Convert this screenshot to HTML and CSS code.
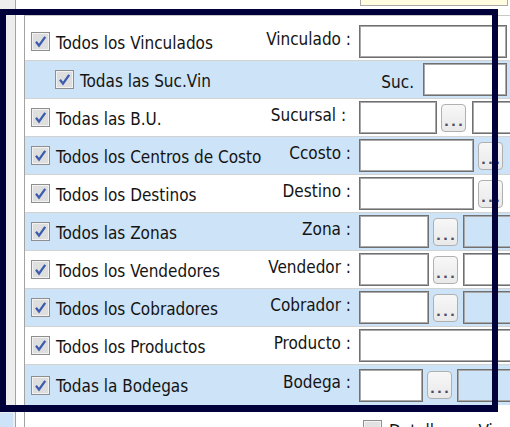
FILE: index.html
```html
<!DOCTYPE html>
<html lang="es">
<head>
<meta charset="utf-8">
<title>Filtros</title>
<link rel="stylesheet" href="styles.css">
</head>
<body>
<div class="screen">
  <div class="side"><div class="side-sel"></div></div>
  <div class="main">
    <div class="topbar"><div class="tip"></div></div>
    <div class="panel">
      <div class="row first">
        <div class="chk"><svg class="cb" viewBox="0 0 19 19"><rect x="0.5" y="0.5" width="18" height="18" fill="#dedede" stroke="#8e8e8e"/><rect x="1.5" y="1.5" width="16" height="16" fill="none" stroke="#f2f2f2"/><path d="M5 9.8 L8 13.6 L14.2 4.8" fill="none" stroke="#3b5cae" stroke-width="2.3"/></svg><span>Todos los Vinculados</span></div>
        <div class="lbl">Vinculado :</div>
        <div class="fields"><div class="inp w148"></div></div>
      </div>
      <div class="row alt sub">
        <div class="chk"><svg class="cb" viewBox="0 0 19 19"><rect x="0.5" y="0.5" width="18" height="18" fill="#dedede" stroke="#8e8e8e"/><rect x="1.5" y="1.5" width="16" height="16" fill="none" stroke="#f2f2f2"/><path d="M5 9.8 L8 13.6 L14.2 4.8" fill="none" stroke="#3b5cae" stroke-width="2.3"/></svg><span>Todas las Suc.Vin</span></div>
        <div class="lbl">Suc.</div>
        <div class="fields"><div class="inp w84"></div></div>
      </div>
      <div class="row">
        <div class="chk"><svg class="cb" viewBox="0 0 19 19"><rect x="0.5" y="0.5" width="18" height="18" fill="#dedede" stroke="#8e8e8e"/><rect x="1.5" y="1.5" width="16" height="16" fill="none" stroke="#f2f2f2"/><path d="M5 9.8 L8 13.6 L14.2 4.8" fill="none" stroke="#3b5cae" stroke-width="2.3"/></svg><span>Todas las B.U.</span></div>
        <div class="lbl">Sucursal :&nbsp;</div>
        <div class="fields"><div class="inp w78"></div><div class="btn">...</div><div class="inp rest gap2"></div></div>
      </div>
      <div class="row alt">
        <div class="chk"><svg class="cb" viewBox="0 0 19 19"><rect x="0.5" y="0.5" width="18" height="18" fill="#dedede" stroke="#8e8e8e"/><rect x="1.5" y="1.5" width="16" height="16" fill="none" stroke="#f2f2f2"/><path d="M5 9.8 L8 13.6 L14.2 4.8" fill="none" stroke="#3b5cae" stroke-width="2.3"/></svg><span>Todos los Centros de Costo</span></div>
        <div class="lbl">Ccosto :</div>
        <div class="fields"><div class="inp w115"></div><div class="btn">...</div></div>
      </div>
      <div class="row">
        <div class="chk"><svg class="cb" viewBox="0 0 19 19"><rect x="0.5" y="0.5" width="18" height="18" fill="#dedede" stroke="#8e8e8e"/><rect x="1.5" y="1.5" width="16" height="16" fill="none" stroke="#f2f2f2"/><path d="M5 9.8 L8 13.6 L14.2 4.8" fill="none" stroke="#3b5cae" stroke-width="2.3"/></svg><span>Todos los Destinos</span></div>
        <div class="lbl">Destino :</div>
        <div class="fields"><div class="inp w115"></div><div class="btn">...</div></div>
      </div>
      <div class="row alt">
        <div class="chk"><svg class="cb" viewBox="0 0 19 19"><rect x="0.5" y="0.5" width="18" height="18" fill="#dedede" stroke="#8e8e8e"/><rect x="1.5" y="1.5" width="16" height="16" fill="none" stroke="#f2f2f2"/><path d="M5 9.8 L8 13.6 L14.2 4.8" fill="none" stroke="#3b5cae" stroke-width="2.3"/></svg><span>Todos las Zonas</span></div>
        <div class="lbl">Zona :</div>
        <div class="fields"><div class="inp w70"></div><div class="btn">...</div><div class="inp rest"></div></div>
      </div>
      <div class="row">
        <div class="chk"><svg class="cb" viewBox="0 0 19 19"><rect x="0.5" y="0.5" width="18" height="18" fill="#dedede" stroke="#8e8e8e"/><rect x="1.5" y="1.5" width="16" height="16" fill="none" stroke="#f2f2f2"/><path d="M5 9.8 L8 13.6 L14.2 4.8" fill="none" stroke="#3b5cae" stroke-width="2.3"/></svg><span>Todos los Vendedores</span></div>
        <div class="lbl">Vendedor :</div>
        <div class="fields"><div class="inp w70"></div><div class="btn">...</div><div class="inp rest"></div></div>
      </div>
      <div class="row alt">
        <div class="chk"><svg class="cb" viewBox="0 0 19 19"><rect x="0.5" y="0.5" width="18" height="18" fill="#dedede" stroke="#8e8e8e"/><rect x="1.5" y="1.5" width="16" height="16" fill="none" stroke="#f2f2f2"/><path d="M5 9.8 L8 13.6 L14.2 4.8" fill="none" stroke="#3b5cae" stroke-width="2.3"/></svg><span>Todos los Cobradores</span></div>
        <div class="lbl">Cobrador :</div>
        <div class="fields"><div class="inp w70"></div><div class="btn">...</div><div class="inp rest"></div></div>
      </div>
      <div class="row">
        <div class="chk"><svg class="cb" viewBox="0 0 19 19"><rect x="0.5" y="0.5" width="18" height="18" fill="#dedede" stroke="#8e8e8e"/><rect x="1.5" y="1.5" width="16" height="16" fill="none" stroke="#f2f2f2"/><path d="M5 9.8 L8 13.6 L14.2 4.8" fill="none" stroke="#3b5cae" stroke-width="2.3"/></svg><span>Todos los Productos</span></div>
        <div class="lbl">Producto :</div>
        <div class="fields"><div class="inp w160"></div></div>
      </div>
      <div class="row alt last">
        <div class="chk"><svg class="cb" viewBox="0 0 19 19"><rect x="0.5" y="0.5" width="18" height="18" fill="#dedede" stroke="#8e8e8e"/><rect x="1.5" y="1.5" width="16" height="16" fill="none" stroke="#f2f2f2"/><path d="M5 9.8 L8 13.6 L14.2 4.8" fill="none" stroke="#3b5cae" stroke-width="2.3"/></svg><span>Todas la Bodegas</span></div>
        <div class="lbl">Bodega :</div>
        <div class="fields"><div class="inp w64"></div><div class="btn">...</div><div class="inp rest"></div></div>
      </div>
      <div class="foot">
        <svg class="cb" viewBox="0 0 19 19"><rect x="0.5" y="0.5" width="18" height="18" fill="#e2e2e2" stroke="#8e8e8e"/><rect x="1.5" y="1.5" width="16" height="16" fill="none" stroke="#f4f4f4"/></svg><span>Detalle por Vin</span>
      </div>
    </div>
  </div>
  <div class="highlight"></div>
</div>
</body>
</html>
```

FILE: styles.css
```css
* { box-sizing: border-box; }

html, body {
  margin: 0;
  padding: 0;
  background: #ffffff;
}

body {
  font-family: "DejaVu Sans Condensed", "DejaVu Sans", sans-serif;
  font-stretch: condensed;
  font-size: 17px;
  color: #141414;
}

.screen {
  position: relative;
  width: 510px;
  height: 427px;
  overflow: hidden;
  display: flex;
  background: #ffffff;
}

.side {
  flex: 0 0 16px;
  height: 427px;
  background: #ededed;
  border-right: 1px solid #a3a3a3;
  display: flex;
  flex-direction: column;
  justify-content: flex-end;
}

.side-sel {
  width: 13px;
  height: 14px;
  background: #cde3f7;
}

.main {
  flex: 0 0 486px;
  margin-left: 8px;
  display: flex;
  flex-direction: column;
}

.topbar {
  flex: 0 0 15px;
  height: 15px;
  background: #ffffff;
}

.tip {
  margin-left: 336px;
  width: 148px;
  height: 6px;
  background: #fffce0;
  border: 1px solid #a8a8a8;
  border-top: none;
}

.panel {
  flex: 0 0 auto;
  border-top: 1px solid #c9c9c9;
  border-left: 1px solid #a3a3a3;
  background: #ffffff;
  width: 520px;
}

.row {
  display: flex;
  align-items: center;
  height: 38px;
  padding-left: 6px;
  border-bottom: 1px solid #d2d2d2;
  white-space: nowrap;
}

.row.first {
  height: 45px;
  padding-top: 7px;
}

.row.alt {
  background: #cde3f7;
}

.row.last {
  height: 40px;
  border-bottom: none;
}

.chk {
  flex: 0 0 224px;
  min-width: 0;
  width: 224px;
  display: flex;
  align-items: center;
  gap: 6px;
  overflow: visible;
}

.row.sub .chk {
  padding-left: 24px;
}

.cb {
  width: 19px;
  height: 19px;
  flex: 0 0 19px;
  display: block;
}

.chk span {
  margin-top: 2px;
  flex: 0 0 auto;
}

.lbl {
  flex: 0 0 96px;
  min-width: 0;
  text-align: right;
  margin-bottom: 6px;
}

.row.sub .lbl {
  flex-basis: 159px;
  margin-bottom: 0;
  margin-top: 4px;
}

.fields {
  margin-left: 8px;
  display: flex;
  align-items: center;
  gap: 4px;
}

.row.sub .fields {
  margin-left: 9px;
}

.inp {
  flex: 0 0 auto;
  height: 33px;
  background: #ffffff;
  border: 1px solid #707070;
  box-shadow: inset 0 0 0 1px #a9a9a9;
}

.inp.rest {
  width: 60px;
  background: transparent;
  margin-left: 1px;
}

.inp.gap2 {
  margin-left: 2px;
}

.w148 { width: 148px; }
.w84 { width: 84px; }
.w78 { width: 78px; }
.w115 { width: 115px; }
.w70 { width: 70px; }
.w64 { width: 64px; }
.w160 { width: 160px; }

.btn {
  flex: 0 0 25px;
  width: 25px;
  height: 28px;
  border: 1px solid #b0b0b0;
  border-radius: 4px;
  background: linear-gradient(#f7f7f7, #e9e9e9);
  display: flex;
  justify-content: center;
  align-items: flex-end;
  font-family: "DejaVu Sans", sans-serif;
  font-stretch: normal;
  font-size: 13px;
  font-weight: bold;
  letter-spacing: 2px;
  padding-left: 2px;
  padding-bottom: 3px;
  line-height: 1;
  color: #4a4a66;
}

.foot {
  display: flex;
  align-items: flex-start;
  gap: 7px;
  padding-left: 338px;
  padding-top: 15px;
  height: 40px;
  white-space: nowrap;
}

.foot span {
  margin-top: 1px;
}

.highlight {
  position: absolute;
  left: 0;
  top: 9px;
  width: 498px;
  height: 403px;
  border: 6px solid #00003a;
  border-bottom-width: 7px;
}
```
